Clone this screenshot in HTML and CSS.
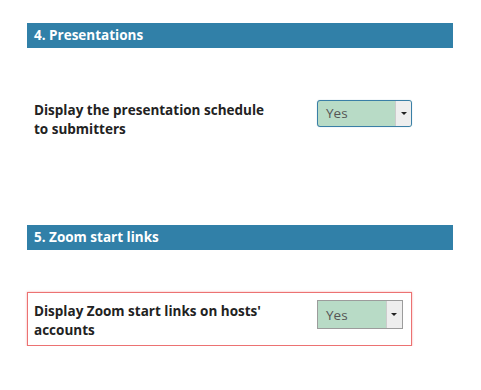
FILE: index.html
```html
<!DOCTYPE html>
<html>
<head>
    <title>Settings</title>
    <link rel="stylesheet" href="styles.css">
</head>
<body>
    <div class="settings">
        <div class="section-title">4. Presentations</div>
        <div class="setting-row first-row">
            <div class="setting-label">Display the presentation schedule to submitters</div>
            <div class="select focused">
                <span class="select-value">Yes</span>
                <span class="select-arrow"></span>
            </div>
        </div>

        <div class="section-title second">5. Zoom start links</div>
        <div class="setting-row highlighted">
            <div class="setting-label">Display Zoom start links on hosts' accounts</div>
            <div class="select narrow">
                <span class="select-value">Yes</span>
                <span class="select-arrow"></span>
            </div>
        </div>
    </div>
</body>
</html>
```

FILE: styles.css
```css
body {
    margin: 0;
    font-family: 'Open Sans', sans-serif;
    background-color: #FFFFFF;
    color: #222222;
}

.settings {
    width: 426px;
    padding: 23px 0 0 27px;
}

.section-title {
    height: 25px;
    line-height: 25px;
    padding-left: 7px;
    background-color: #3180A8;
    color: #FFFFFF;
    font-size: 13.5px;
    font-weight: bold;
}

.section-title.second {
    margin-top: 85px;
}

.setting-row {
    display: flex;
    align-items: flex-start;
    width: 371px;
    padding: 0 6px;
    border: 1px solid transparent;
}

.first-row {
    width: 390px;
    margin-top: 51px;
}

.setting-label {
    flex-shrink: 0;
    width: 240px;
    margin-right: 43px;
    padding-top: 1px;
    font-size: 13.5px;
    font-weight: bold;
    line-height: 19px;
}

/* Highlighted row with the red outline */
.highlighted {
    margin-top: 42px;
    height: 45px;
    padding-top: 7px;
    border: 1px solid #EC7272;
    box-shadow: 0 0 2px rgba(236, 114, 114, 0.6);
}

.highlighted .setting-label {
    padding-top: 2px;
}

.select {
    display: flex;
    flex-shrink: 0;
    width: 93px;
    height: 25px;
    border: 1px solid #9AA5A0;
    background-color: #B8DBC6;
    font-size: 13.5px;
}

.select.focused {
    border-color: #3A7FA6;
    border-radius: 3px;
    box-shadow: 0 0 1px rgba(58, 127, 166, 0.5);
}

.select.narrow {
    width: 84px;
    height: 27px;
    border-color: #9C9C9C;
}

.select-value {
    flex-grow: 1;
    padding-left: 8px;
    line-height: 25px;
    color: #555555;
}

.narrow .select-value {
    line-height: 28px;
}

.select-arrow {
    position: relative;
    width: 15px;
    background-color: #EEEEEE;
    border-left: 1px solid #CCCCCC;
}

.focused .select-arrow {
    border-radius: 0 2px 2px 0;
}

.select-arrow::after {
    content: '';
    position: absolute;
    left: 5px;
    top: 11px;
    border-left: 3px solid transparent;
    border-right: 3px solid transparent;
    border-top: 3px solid #222222;
}

.narrow .select-arrow::after {
    left: 4px;
    top: 12px;
}
```
